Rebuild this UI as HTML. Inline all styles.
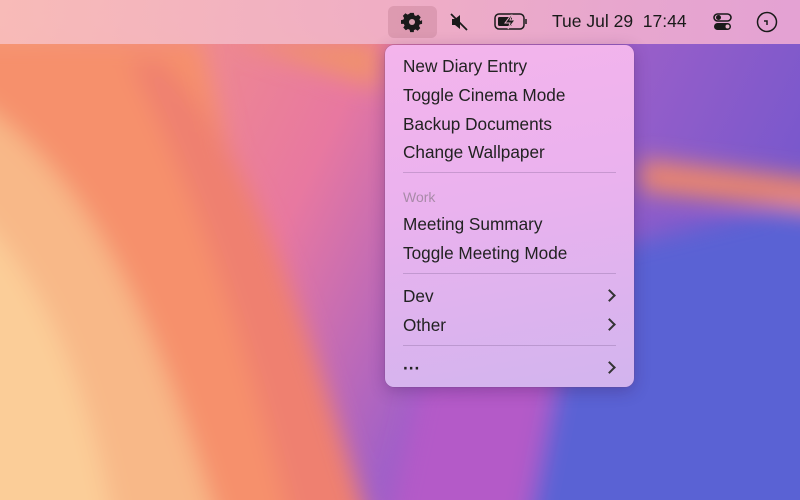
<!DOCTYPE html>
<html><head><style>
html,body{margin:0;width:800px;height:500px;overflow:hidden}
body{position:relative;font-family:"Liberation Sans",sans-serif}
.bg{position:absolute;left:0;top:0;display:block}
.bar{position:absolute;left:0;top:0;width:800px;height:44px;background:linear-gradient(90deg,rgba(248,190,190,.9),rgba(240,178,200,.92) 50%,rgba(236,168,212,.92));}
.bt{position:absolute;top:0;height:44px;line-height:43px;font-size:17.5px;color:#1a1a1a}
.menu{position:absolute;left:385px;top:45px;width:249px;height:342px;border-radius:9px;background:linear-gradient(170deg,#f4b4ec 0%,#eab2ee 45%,#d2b4ee 100%);box-shadow:0 4px 16px rgba(60,20,80,.3),0 0 0 .5px rgba(120,80,140,.4)}
.it{position:absolute;left:18px;font-size:17.2px;color:#222;line-height:20px}
.sep{position:absolute;left:18px;width:213px;height:1px;background:rgba(120,90,140,.3)}
.ch{position:absolute;left:220px;width:7px;height:7px;border-right:2px solid #333;border-top:2px solid #333;transform:rotate(45deg)}
</style></head><body>
<svg class="bg" width="800" height="500" viewBox="0 0 800 500">
<defs>
<linearGradient id="g0" x1="0" y1="0" x2="1" y2="0.3"><stop offset="0" stop-color="#f6a07c"/><stop offset=".45" stop-color="#e878a0"/><stop offset=".7" stop-color="#a060c8"/><stop offset="1" stop-color="#7a58cc"/></linearGradient>
<filter id="b" filterUnits="userSpaceOnUse" x="-100" y="-100" width="1000" height="700"><feGaussianBlur stdDeviation="12"/></filter>
</defs>
<rect width="800" height="500" fill="url(#g0)"/>
<g filter="url(#b)">
<path d="M560 260 L860 190 L860 560 L460 560 Z" fill="#5a62d4"/>
<path d="M640 160 L860 185 L860 215 L640 190 Z" fill="#f08868"/>
<path d="M-60 40 L200 40 L330 560 L-60 560 Z" fill="#f6906c"/>
<path d="M-60 80 C80 150 150 300 230 560 L-60 560 Z" fill="#f8b888"/>
<path d="M-60 180 C40 260 90 380 120 560 L-60 560 Z" fill="#fbcd98"/>
<path d="M160 60 C250 150 300 300 380 560 L300 560 C250 350 200 200 130 60 Z" fill="#ef8070"/>
<path d="M230 40 L380 40 L380 90 Z" fill="#f09070"/>
<path d="M420 380 L560 360 L520 560 L380 560 Z" fill="#b45ac8"/>
</g>
</svg>
<div class="bar"></div>
<div style="position:absolute;left:388px;top:6px;width:49px;height:32px;border-radius:6px;background:rgba(180,110,130,.3)"></div>
<svg style="position:absolute;left:401px;top:11px" width="22" height="22" viewBox="0 0 24 24"><path fill="#1a1a1a" d="M10 2h4l.6 2.6 1.8.8 2.3-1.4 2.8 2.8-1.4 2.3.8 1.8L23 10v4l-2.6.6-.8 1.8 1.4 2.3-2.8 2.8-2.3-1.4-1.8.8L14 23h-4l-.6-2.6-1.8-.8-2.3 1.4-2.8-2.8 1.4-2.3-.8-1.8L0 14v-4l2.6-.6.8-1.8L2 5.3 4.8 2.5l2.3 1.4 1.8-.8z"/><circle cx="12" cy="12" r="3.3" fill="#d8a0b0"/></svg>
<svg style="position:absolute;left:449px;top:12px" width="20" height="20" viewBox="0 0 20 20"><path d="M3 7h3l5-4v14l-5-4H3z" fill="#1a1a1a"/><path d="M2 2l16 16" stroke="#1a1a1a" stroke-width="1.8"/></svg>
<svg style="position:absolute;left:494px;top:12px" width="36" height="20" viewBox="0 0 36 20"><rect x="1" y="2" width="29" height="15" rx="4" fill="none" stroke="#1a1a1a" stroke-width="1.5"/><rect x="4" y="5" width="14" height="9" rx="1.5" fill="#1a1a1a"/><path d="M32 7v5" stroke="#1a1a1a" stroke-width="1.5"/><path d="M17 3l-6 8h5l-2 6 7-9h-5l2-5z" fill="#1a1a1a" stroke="#e8b0c8" stroke-width="1"/></svg>
<div class="bt" style="left:552px">Tue Jul 29&nbsp; 17:44</div>
<svg style="position:absolute;left:713px;top:12px" width="20" height="20" viewBox="0 0 20 20"><rect x="1" y="2" width="17" height="7" rx="3.5" fill="none" stroke="#1a1a1a" stroke-width="1.6"/><circle cx="5.5" cy="5.5" r="2.5" fill="#1a1a1a"/><rect x="1" y="11" width="17" height="7" rx="3.5" fill="#1a1a1a"/><circle cx="14.5" cy="14.5" r="2" fill="#e8b0c8"/></svg>
<svg style="position:absolute;left:756px;top:11px" width="22" height="22" viewBox="0 0 22 22"><circle cx="11" cy="11" r="9.5" fill="none" stroke="#1a1a1a" stroke-width="1.5"/><path d="M8 10h3v4" fill="none" stroke="#1a1a1a" stroke-width="1.5"/></svg>
<div class="menu">
<div class="it" style="top:11px">New Diary Entry</div>
<div class="it" style="top:40px">Toggle Cinema Mode</div>
<div class="it" style="top:69px">Backup Documents</div>
<div class="it" style="top:97px">Change Wallpaper</div>
<div class="sep" style="top:127px"></div>
<div class="it" style="top:142px;font-size:14px;color:#a88aa8">Work</div>
<div class="it" style="top:169px">Meeting Summary</div>
<div class="it" style="top:198px">Toggle Meeting Mode</div>
<div class="sep" style="top:228px"></div>
<div class="it" style="top:241px">Dev</div><div class="ch" style="top:246px"></div>
<div class="it" style="top:270px">Other</div><div class="ch" style="top:275px"></div>
<div class="sep" style="top:300px"></div>
<div class="it" style="top:313px;font-weight:bold">···</div><div class="ch" style="top:318px"></div>
</div>
</body></html>
